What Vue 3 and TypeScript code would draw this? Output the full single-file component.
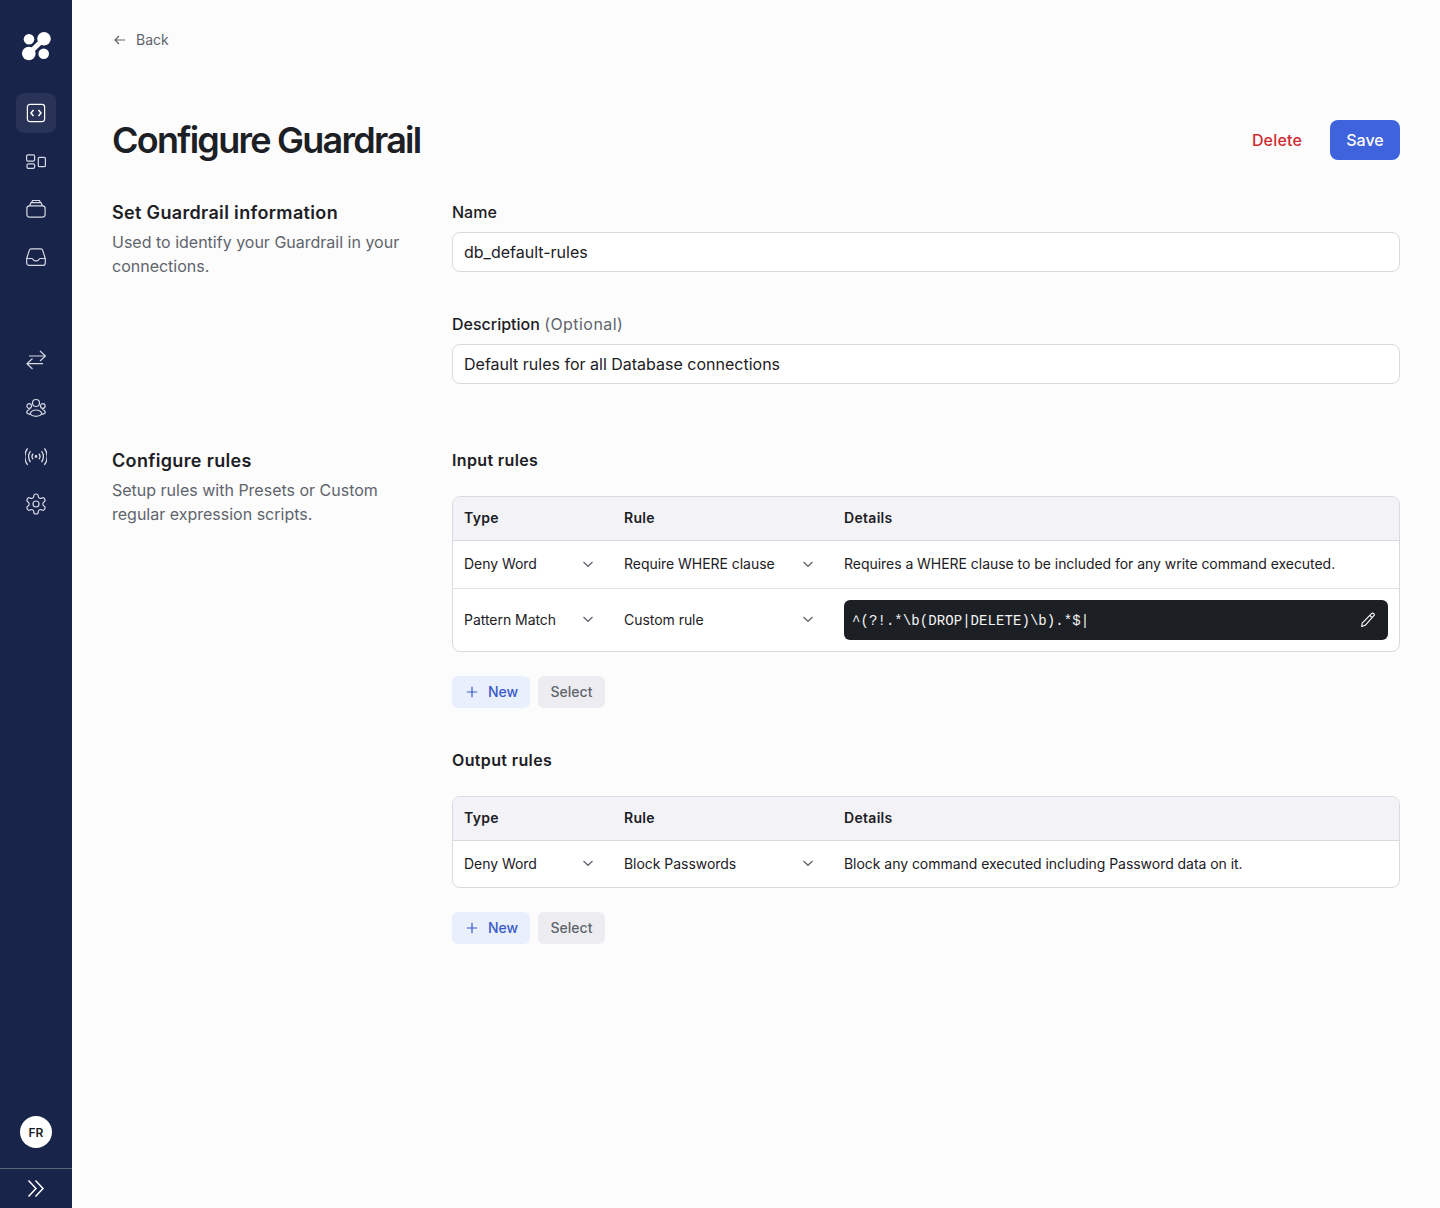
<script setup lang="ts">
interface RuleRow { type: string; rule: string; details?: string; code?: string }
const inputRules: RuleRow[] = [
  { type: 'Deny Word', rule: 'Require WHERE clause', details: 'Requires a WHERE clause to be included for any write command executed.' },
  { type: 'Pattern Match', rule: 'Custom rule', code: '^(?!.*\\b(DROP|DELETE)\\b).*$|' },
]
const outputRules: RuleRow[] = [
  { type: 'Deny Word', rule: 'Block Passwords', details: 'Block any command executed including Password data on it.' },
]
const groups = [
  { title: 'Input rules', rows: inputRules },
  { title: 'Output rules', rows: outputRules },
]
</script>

<template>
  <div class="page">
    <aside class="sidebar">
      <div class="logo">
        <svg width="32" height="32" viewBox="0 0 32 32" fill="#fff">
          <circle cx="9" cy="9.200" r="5.300" />
          <circle cx="23.700" cy="23.800" r="5.300" />
          <circle cx="24" cy="8.800" r="6.800" />
          <circle cx="8.800" cy="23.500" r="6.800" />
          <path d="M24 8.800 8.800 23.500" stroke="#fff" stroke-width="5" />
        </svg>
      </div>
      <nav class="nav-top">
        <span class="nav-item active">
          <svg class="ico" viewBox="0 0 20 20"><rect x="1.400" y="1.400" width="17.200" height="17.200" rx="2.500" /><path class="thick" d="M7.500 7 5 10l2.500 3M12.500 7l2.500 3-2.500 3" /></svg>
        </span>
        <span class="nav-item">
          <svg class="ico" viewBox="0 0 20 20"><rect x="0.600" y="3.900" width="8" height="6.200" rx="1.300" /><rect x="1" y="12.900" width="7.600" height="4.500" rx="1.300" /><rect x="12.300" y="6.300" width="7.100" height="9.400" rx="1.300" /></svg>
        </span>
        <span class="nav-item">
          <svg class="ico" viewBox="0 0 20 20"><rect x="0.900" y="6.900" width="18.200" height="11.200" rx="2.500" /><path d="M3.500 6.900 5 3.700h10l1.500 3.200M5.500 3.700l1-2.200h7l1 2.200" /></svg>
        </span>
        <span class="nav-item">
          <svg class="ico" viewBox="0 0 20 20"><path d="M.7 11.500 3.300 3.400A2 2 0 0 1 5.200 1.900h9.600a2 2 0 0 1 1.900 1.500l2.600 8.100v4.400a2.500 2.500 0 0 1-2.500 2.500H3.200A2.500 2.500 0 0 1 .7 15.900z" /><path d="M.7 11.500h5c.7 0 1.100.5 1.400 1 .5.900 1.200 1.300 2.100 1.300h1.600c.9 0 1.600-.4 2.100-1.300.3-.5.700-1 1.400-1h5" /></svg>
        </span>
      </nav>
      <nav class="nav-mid">
        <span class="nav-item">
          <svg class="ico" viewBox="0 0 20 20"><path d="M3 6h16.500M14 1l5.500 5-5.500 5M17 13.700H1M6.500 8.500 1 13.700 6.500 19" /></svg>
        </span>
        <span class="nav-item">
          <svg class="ico" viewBox="0 0 20 20"><circle cx="10" cy="5" r="3.500" /><circle cx="3.200" cy="8" r="2.300" /><circle cx="16.800" cy="8" r="2.300" /><path d="M4 15.800c1-2.500 3.300-3.800 6-3.800s5 1.300 6 3.800c-1.300 1.600-3.500 2.500-6 2.500s-4.700-.9-6-2.500zM3.800 11.500C2 11.700.8 13 .7 14.700c.6.900 1.800 1.500 3.100 1.700M16.200 11.500c1.800.2 3 1.500 3.100 3.200-.6.900-1.800 1.500-3.100 1.700" /></svg>
        </span>
        <span class="nav-item">
          <svg class="ico wide" viewBox="0 0 20 20"><circle cx="10" cy="10.500" r="0.700" /><path d="M7.400 8a3.800 3.800 0 0 0 0 5M12.600 8a3.800 3.800 0 0 1 0 5M5 5.500a8 8 0 0 0 0 10M15 5.500a8 8 0 0 1 0 10M2.400 3a12 12 0 0 0 0 15M17.600 3a12 12 0 0 1 0 15" /></svg>
        </span>
        <span class="nav-item">
          <svg class="ico gear" viewBox="0 0 24 24"><path d="M12.220 2h-.44a2 2 0 0 0-2 2v.18a2 2 0 0 1-1 1.730l-.43.250a2 2 0 0 1-2 0l-.15-.08a2 2 0 0 0-2.730.730l-.22.380a2 2 0 0 0 .730 2.730l.15.100a2 2 0 0 1 1 1.720v.510a2 2 0 0 1-1 1.740l-.15.090a2 2 0 0 0-.73 2.730l.22.380a2 2 0 0 0 2.730.730l.15-.08a2 2 0 0 1 2 0l.43.250a2 2 0 0 1 1 1.730V20a2 2 0 0 0 2 2h.44a2 2 0 0 0 2-2v-.18a2 2 0 0 1 1-1.730l.43-.25a2 2 0 0 1 2 0l.15.080a2 2 0 0 0 2.730-.730l.22-.390a2 2 0 0 0-.730-2.730l-.15-.080a2 2 0 0 1-1-1.740v-.500a2 2 0 0 1 1-1.740l.15-.090a2 2 0 0 0 .730-2.730l-.22-.380a2 2 0 0 0-2.730-.730l-.15.080a2 2 0 0 1-2 0l-.43-.250a2 2 0 0 1-1-1.730V4a2 2 0 0 0-2-2z" /><circle cx="12" cy="12" r="3" /></svg>
        </span>
      </nav>
      <div class="side-bottom">
        <div class="avatar">FR</div>
        <div class="collapse">
          <svg width="20" height="20" viewBox="0 0 20 20" fill="none" stroke="#fff" stroke-width="1.500"><path d="M2.500 1.500 10 9.500l-7.500 8M9.500 1.500 17 9.500l-7.500 8" /></svg>
        </div>
      </div>
    </aside>

    <main class="main">
      <a class="back">
        <svg width="16" height="16" viewBox="0 0 16 16" fill="none" stroke="currentColor" stroke-width="1.200"><path d="M13 8H3.200M7 4 3 8l4 4" /></svg>
        <span>Back</span>
      </a>

      <header class="head">
        <h1>Configure Guardrail</h1>
        <div class="head-actions">
          <button class="btn-delete">Delete</button>
          <button class="btn-save">Save</button>
        </div>
      </header>

      <section class="section info">
        <div class="side-text">
          <h2>Set Guardrail information</h2>
          <p>Used to identify your Guardrail in your connections.</p>
        </div>
        <div class="fields">
          <label class="field">
            <span class="label">Name</span>
            <input class="input" value="db_default-rules" />
          </label>
          <label class="field">
            <span class="label">Description <em>(Optional)</em></span>
            <input class="input" value="Default rules for all Database connections" />
          </label>
        </div>
      </section>

      <section class="section rules">
        <div class="side-text">
          <h2>Configure rules</h2>
          <p>Setup rules with Presets or Custom regular expression scripts.</p>
        </div>
        <div class="groups">
          <div v-for="g in groups" :key="g.title" class="group">
            <h3>{{ g.title }}</h3>
            <div class="table">
              <div class="tr th">
                <div class="td">Type</div>
                <div class="td">Rule</div>
                <div class="td">Details</div>
              </div>
              <div v-for="r in g.rows" :key="r.rule" class="tr" :class="{ tall: r.code }">
                <div class="td sel">
                  <span>{{ r.type }}</span>
                  <svg class="chev" viewBox="0 0 16 16"><path d="M3.500 6 8 10.300 12.500 6" /></svg>
                </div>
                <div class="td sel">
                  <span>{{ r.rule }}</span>
                  <svg class="chev" viewBox="0 0 16 16"><path d="M3.500 6 8 10.300 12.500 6" /></svg>
                </div>
                <div v-if="r.details" class="td">{{ r.details }}</div>
                <div v-else class="td code-cell">
                  <div class="code">
                    <span>{{ r.code }}</span>
                    <svg width="16" height="16" viewBox="0 0 16 16" fill="none" stroke="#fff" stroke-width="1.100"><path d="M11.300 1.800a1.600 1.600 0 0 1 2.600 1.900L5.200 13.300l-3.500 1.300.5-3.400zM9.800 3.500l2.700 2.300" stroke-linejoin="round" /></svg>
                  </div>
                </div>
              </div>
            </div>
            <div class="actions">
              <button class="btn-new">
                <svg width="16" height="16" viewBox="0 0 16 16" fill="none" stroke="currentColor" stroke-width="1.200"><path d="M8 2.800v10.400M2.800 8h10.400" /></svg>
                New
              </button>
              <button class="btn-select">Select</button>
            </div>
          </div>
        </div>
      </section>
    </main>
  </div>
</template>

<style>
html, body { margin: 0; background: #fcfcfd; }
</style>

<style scoped>
.page {
  display: flex;
  height: 1208px;
  overflow: hidden;
  background: #fcfcfd;
  font-family: Inter, "Liberation Sans", sans-serif;
  color: #1c2024;
}
.sidebar {
  flex: 0 0 72px;
  width: 72px;
  background: #182449;
  display: flex;
  flex-direction: column;
  align-items: center;
}
.logo { margin-top: 30px; height: 32px; width: 32px; }
.nav-top { margin-top: 31px; display: flex; flex-direction: column; gap: 8px; }
.nav-mid { margin-top: 63px; display: flex; flex-direction: column; gap: 8px; }
.nav-item {
  width: 40px;
  height: 40px;
  border-radius: 8px;
  display: flex;
  align-items: center;
  justify-content: center;
}
.nav-item.active { background: #283357; }
.ico {
  width: 20px;
  height: 20px;
  fill: none;
  stroke: #d6dae4;
  stroke-width: 1.200;
}
.ico.gear { width: 24px; height: 24px; }
.ico.wide { width: 22px; height: 22px; }
.active .ico { stroke: #fff; }
.ico .thick { stroke-width: 1.500; }
.side-bottom {
  margin-top: auto;
  width: 100%;
  display: flex;
  flex-direction: column;
  align-items: center;
}
.avatar {
  width: 32px;
  height: 32px;
  border-radius: 50%;
  background: #fff;
  color: #1c2024;
  font-size: 12px;
  font-weight: 600;
  display: flex;
  align-items: center;
  justify-content: center;
  margin-bottom: 20px;
}
.collapse {
  width: 100%;
  height: 39px;
  border-top: 1px solid #5c6478;
  display: flex;
  align-items: center;
  justify-content: center;
}
.main {
  flex: 1;
  min-width: 0;
  padding: 32px 40px 0;
}
.back {
  display: flex;
  align-items: center;
  gap: 8px;
  height: 16px;
  font-size: 14px;
  line-height: 16px;
  color: #60646c;
}
.head {
  margin-top: 72px;
  height: 40px;
  display: flex;
  align-items: center;
  justify-content: space-between;
}
h1 {
  margin: 0;
  font-size: 36px;
  line-height: 40px;
  font-weight: 600;
  letter-spacing: -0.0485em;
  color: #1c2024;
}
.head-actions { display: flex; align-items: center; gap: 28px; }
button { font-family: inherit; border: 0; cursor: pointer; padding: 0; }
.btn-delete { background: none; color: #ce2c31; font-size: 16px; font-weight: 500; letter-spacing: 0.17px; }
.btn-save {
  width: 70px;
  height: 40px;
  border-radius: 8px;
  background: #3e63dd;
  color: #fff;
  font-size: 16px;
  font-weight: 500;
}
.section {
  display: grid;
  grid-template-columns: 340px 1fr;
}
.info { margin-top: 40px; }
.rules { margin-top: 64px; }
.side-text { padding-right: 40px; }
h2 {
  margin: 0;
  font-size: 18px;
  line-height: 26px;
  font-weight: 600;
  letter-spacing: 0.34px;
  color: #1c2024;
}
.side-text p {
  margin: 4px 0 0;
  font-size: 16px;
  line-height: 24px;
  color: #60646c;
}
.fields { display: flex; flex-direction: column; gap: 40px; }
.field { display: flex; flex-direction: column; gap: 8px; }
.label { font-size: 16px; line-height: 24px; font-weight: 500; color: #1c2024; }
.label em { font-style: normal; font-weight: 400; color: #60646c; letter-spacing: 0.45px; }
.input {
  box-sizing: border-box;
  height: 40px;
  width: 100%;
  border: 1px solid #d9d9e0;
  border-radius: 8px;
  background: #fff;
  padding: 0 11px;
  font: inherit;
  font-size: 16px;
  color: #1c2024;
  outline: none;
}
.groups { display: flex; flex-direction: column; gap: 40px; }
h3 {
  margin: 0;
  font-size: 16px;
  line-height: 24px;
  font-weight: 600;
  letter-spacing: 0.36px;
  color: #1c2024;
}
.table {
  margin-top: 24px;
  border: 1px solid #d9d9e0;
  border-radius: 8px;
  background: #fff;
  overflow: hidden;
}
.tr {
  display: grid;
  grid-template-columns: 160px 220px 1fr;
  align-items: center;
  height: 47px;
  font-size: 14px;
  letter-spacing: -0.04px;
  color: #1c2024;
}
.tr + .tr { border-top: 1px solid #e0e0e6; }
.tr:last-child { height: 46px; }
.tr.tall { height: 62px; }
.tr.th {
  height: 43px;
  background: #f2f2f7;
  font-weight: 600;
  letter-spacing: 0.3px;
  border-bottom: 1px solid #d9d9e0;
}
.tr.th + .tr { border-top: 0; }
.td { padding: 0 11px 2px; min-width: 0; }
.td.code-cell { padding-bottom: 0; }
.sel {
  display: flex;
  align-items: center;
  justify-content: space-between;
  padding-right: 17px;
}
.chev {
  width: 16px;
  height: 16px;
  fill: none;
  stroke: #60646c;
  stroke-width: 1.200;
  flex: none;
}
.code {
  height: 40px;
  border-radius: 6px;
  background: #1c2024;
  color: #f4f4f5;
  display: flex;
  align-items: center;
  justify-content: space-between;
  padding: 0 12px 0 8px;
  font-family: "Liberation Mono", "DejaVu Sans Mono", monospace;
  font-size: 14px;
  letter-spacing: 0.07px;
}
.code span { padding-top: 1px; }
.actions { margin-top: 24px; display: flex; gap: 8px; }
.btn-new, .btn-select {
  box-sizing: border-box;
  height: 32px;
  border-radius: 6px;
  font-size: 14px;
  font-weight: 500;
  display: flex;
  align-items: center;
  padding-bottom: 2px;
}
.btn-new svg { margin-top: 2px; }
.btn-new {
  width: 78px;
  padding-left: 12px;
  gap: 8px;
  background: #e9f0fd;
  color: #3a5bc7;
}
.btn-select {
  width: 67px;
  justify-content: center;
  background: #ededf1;
  color: #60646c;
}
</style>
